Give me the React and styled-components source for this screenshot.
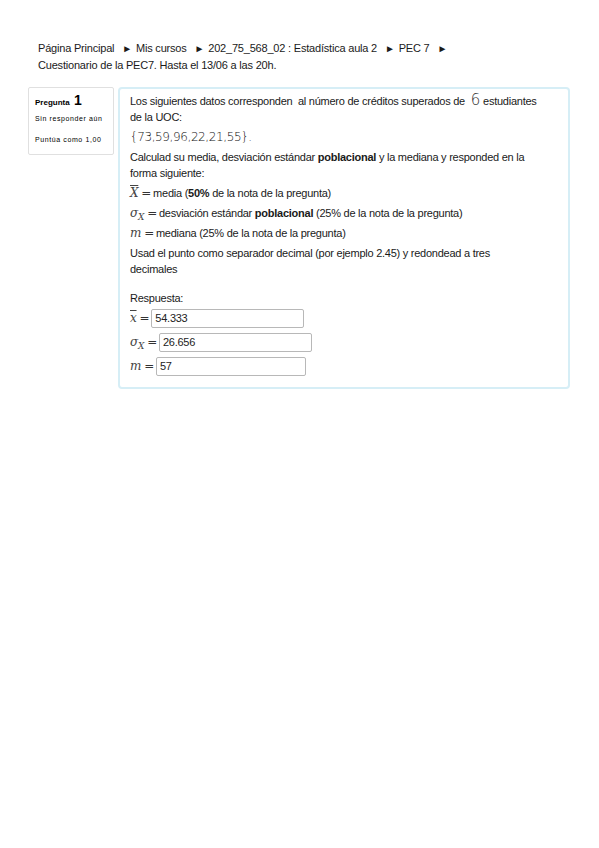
import React from 'react';
import styled, { createGlobalStyle } from 'styled-components';

const GlobalStyle = createGlobalStyle`
  html, body {
    margin: 0;
    padding: 0;
    background: #fff;
  }
  body {
    font-family: "Liberation Sans", Arial, sans-serif;
    color: #1a1a1a;
  }
`;

const Page = styled.div`
  width: 599px;
  min-height: 848px;
  padding: 40px 28px 0 28px;
  box-sizing: border-box;
`;

const Breadcrumb = styled.nav`
  padding-left: 10px;
  font-size: 11px;
  line-height: 17px;
  letter-spacing: -0.2px;
  width: 440px;
`;

const Sep = styled.span`
  font-size: 10px;
  margin: 0 4px 0 8px;
`;

const Question = styled.div`
  display: flex;
  align-items: flex-start;
  gap: 4px;
  margin-top: 13px;
`;

const Info = styled.div`
  width: 86px;
  height: 68px;
  box-sizing: border-box;
  border: 1px solid #e0e0e0;
  border-radius: 2px;
  padding: 4px 6px;
  font-size: 7px;
  color: #000;
`;

const InfoNo = styled.div`
  font-weight: bold;
  font-size: 8px;
  line-height: 16px;
  span {
    font-size: 14px;
    margin-left: 2px;
  }
`;

const InfoLine = styled.div`
  line-height: 10px;
  letter-spacing: 0.6px;
  white-space: nowrap;
  margin-top: ${(p) => p.$mt}px;
`;

const Content = styled.div`
  width: 452px;
  height: 302px;
  box-sizing: border-box;
  border: 2px solid #d6eef6;
  border-radius: 4px;
  padding: 4px 28px 5px 10px;
  font-size: 11px;
  line-height: 16px;
  letter-spacing: -0.25px;
`;

const P = styled.p`
  margin: 0 0 4px 0;
`;

const Num = styled.span`
  font-family: "DejaVu Sans", sans-serif;
  font-weight: 200;
  font-size: 15px;
  line-height: 1;
  color: #333;
  margin: 0 3px;
`;

const Set = styled.p`
  margin: 0 0 4px 0;
  font-family: "DejaVu Sans", sans-serif;
  font-weight: 200;
  font-size: 12px;
  color: #111;
  letter-spacing: -0.4px;
`;

const MathVar = styled.span`
  font-family: "DejaVu Serif", serif;
  font-style: italic;
  font-size: 12px;
  line-height: 1;
  color: #444;
  text-decoration: ${(p) => (p.$bar ? 'overline' : 'none')};
  text-decoration-thickness: 1px;
  sub {
    font-size: 9px;
    vertical-align: -3px;
    line-height: 0;
  }
`;

const Eq = styled.span`
  font-family: "DejaVu Sans", sans-serif;
  font-size: 12px;
  line-height: 1;
  margin: 0 2px 0 3px;
  color: #333;
`;

const Answer = styled.div`
  margin-top: 13px;
`;

const Field = styled.div`
  display: flex;
  align-items: center;
  height: 24px;
  &:first-of-type {
    margin-top: 1px;
  }
`;

const Input = styled.div`
  width: ${(p) => p.$w}px;
  height: 17px;
  border: 1px solid #b8b8b8;
  border-radius: 2px;
  font-size: 11px;
  line-height: 17px;
  padding-left: 3px;
  box-sizing: content-box;
  color: #222;
`;

export default function App() {
  return (
    <>
      <GlobalStyle />
      <Page>
        <Breadcrumb>
          Página Principal<Sep>►</Sep>Mis cursos<Sep>►</Sep>202_75_568_02 : Estadística aula 2<Sep>►</Sep>PEC 7<Sep>►</Sep>
          <br />
          Cuestionario de la PEC7. Hasta el 13/06 a las 20h.
        </Breadcrumb>
        <Question>
          <Info>
            <InfoNo>
              Pregunta <span>1</span>
            </InfoNo>
            <InfoLine $mt={3}>Sin responder aún</InfoLine>
            <InfoLine $mt={11}>Puntúa como 1,00</InfoLine>
          </Info>
          <Content>
            <P>
              Los siguientes datos corresponden&nbsp; al número de créditos superados de <Num>6</Num>estudiantes de la UOC:
            </P>
            <Set>{'{73,59,96,22,21,55}.'}</Set>
            <P>
              Calculad su media, desviación estándar <b>poblacional</b> y la mediana y responded en la forma siguiente:
            </P>
            <P>
              <MathVar $bar>X</MathVar>
              <Eq>=</Eq>media (<b>50%</b> de la nota de la pregunta)
            </P>
            <P>
              <MathVar>
                σ<sub>X</sub>
              </MathVar>
              <Eq>=</Eq>desviación estándar <b>poblacional</b> (25% de la nota de la pregunta)
            </P>
            <P>
              <MathVar>m</MathVar>
              <Eq>=</Eq>mediana (25% de la nota de la pregunta)
            </P>
            <P>
              Usad el punto como separador decimal (por ejemplo 2.45) y redondead a tres
              <br />
              decimales
            </P>
            <Answer>
              <div>Respuesta:</div>
              <Field>
                <MathVar $bar>x</MathVar>
                <Eq>=</Eq>
                <Input $w={148}>54.333</Input>
              </Field>
              <Field>
                <MathVar>
                  σ<sub>X</sub>
                </MathVar>
                <Eq>=</Eq>
                <Input $w={148}>26.656</Input>
              </Field>
              <Field>
                <MathVar>m</MathVar>
                <Eq>=</Eq>
                <Input $w={145}>57</Input>
              </Field>
            </Answer>
          </Content>
        </Question>
      </Page>
    </>
  );
}
